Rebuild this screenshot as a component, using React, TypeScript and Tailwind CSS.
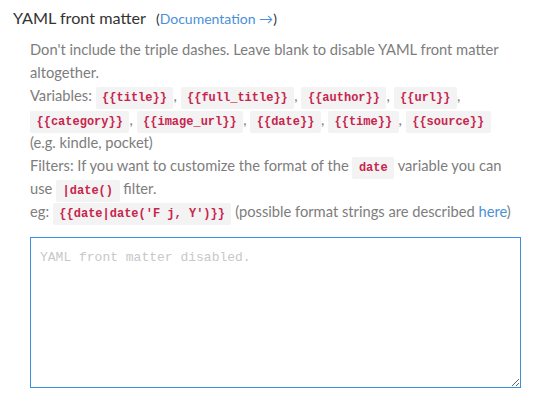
import React from "react";

const C = ({ children }: { children: React.ReactNode }) => (
  <code className="bg-[#f3f3f3] text-[#c7254e] font-['Liberation_Mono',monospace] text-[12px] leading-none px-[6.5px] py-[4px] rounded-[2px] font-bold">
    {children}
  </code>
);

export default function App() {
  return (
    <div className="w-[540px] h-[402px] bg-white font-['Lato',sans-serif] overflow-hidden">
      <div className="pl-[13px] pt-[6px] flex items-baseline">
        <span className="text-[16.2px] text-[#333]">YAML front matter</span>
        <span className="text-[14px] text-[#333] ml-[10px]">
          (<a className="text-[#4a90d9]">Documentation →</a>)
        </span>
      </div>
      <div className="pl-[30px] pr-[16px] mt-[8px] text-[14.7px] leading-[23.1px] text-[#7d7d7d]">
        <div>Don't include the triple dashes. Leave blank to disable YAML front matter altogether.</div>
        <div>
          Variables: <C>{"{{title}}"}</C>, <C>{"{{full_title}}"}</C>, <C>{"{{author}}"}</C>, <C>{"{{url}}"}</C>,{" "}
          <br />
          <C>{"{{category}}"}</C>, <C>{"{{image_url}}"}</C>, <C>{"{{date}}"}</C>, <C>{"{{time}}"}</C>, <C>{"{{source}}"}</C>
          <br />
          (e.g. kindle, pocket)
        </div>
        <div>
          Filters: If you want to customize the format of the <C>date</C> variable you can
          <br />
          use <C>|date()</C> filter.
        </div>
        <div>
          eg: <C>{"{{date|date('F j, Y')}}"}</C> (possible format strings are described{" "}
          <a className="text-[#4a90d9]">here</a>)
        </div>
      </div>
      <div className="pl-[30px] mt-[14px]">
        <textarea
          placeholder="YAML front matter disabled."
          className="block w-[491px] h-[151px] border border-[#3b8fe0] outline-none px-[9px] pt-[10px] pb-[9px] font-['Liberation_Mono',monospace] text-[13px] text-[#333] placeholder:text-[#c8c8c8]"
        />
      </div>
    </div>
  );
}
